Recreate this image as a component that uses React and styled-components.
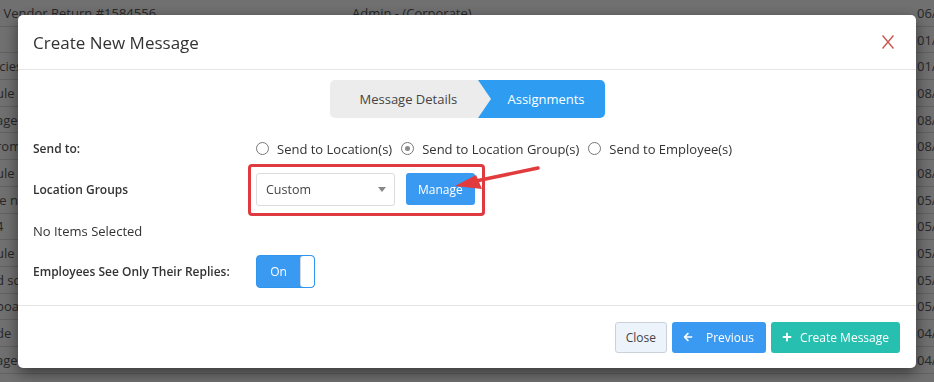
import React, {useState} from 'react'
import styled, {createGlobalStyle} from 'styled-components'
import {FaArrowLeft, FaPlus} from 'react-icons/fa'

const GlobalStyle = createGlobalStyle`
  html, body {
    margin: 0;
    padding: 0;
    background: #fff;
    font-family: "Open Sans", "Liberation Sans", Arial, sans-serif;
    overflow: hidden;
  }
`

// page behind the dialog
const Page = styled.div`
  width: 934px;
  height: 382px;
  overflow: hidden;
  background: #fff;
`
const TableRow = styled.div`
  display: grid;
  grid-template-columns: 356px 565px 120px;
  height: 26.7px;
  align-items: center;
  border-bottom: 1px solid #dcdcdc;
  box-sizing: border-box;
  font-size: 13px;
  color: #5a5a5a;
  margin-left: -4px;
  white-space: nowrap;
`
const Cell = styled.div`
  overflow: hidden;
`
const Backdrop = styled.div`
  position: fixed;
  inset: 0;
  background: rgba(0, 0, 0, 0.56);
`

// dialog
const Modal = styled.div`
  position: fixed;
  top: 15px;
  left: 18px;
  width: 898px;
  height: 353px;
  background: #fff;
  border-radius: 5px;
  box-shadow: 0 5px 15px rgba(0, 0, 0, 0.5);
  display: flex;
  flex-direction: column;
  color: #333;
`
const Header = styled.div`
  height: 54px;
  display: flex;
  align-items: center;
  justify-content: space-between;
  padding: 0 15px;
  border-bottom: 1px solid #e5e5e5;
`
const Title = styled.h4`
  margin: 0;
  font-size: 17px;
  font-weight: 400;
  color: #333;
`
const CloseX = styled.button`
  border: 0;
  background: none;
  padding: 0;
  margin-right: 7px;
  width: 12px;
  height: 14px;
  display: flex;
  cursor: pointer;
`
const Body = styled.div`
  flex: 1;
  padding: 10px 15px 0;
`
const Steps = styled.div`
  display: flex;
  width: max-content;
  margin: 0 auto 10px;
  border-radius: 5px;
  overflow: hidden;
  height: 38px;
`
const Step = styled.div`
  position: relative;
  display: flex;
  align-items: center;
  font-size: 13px;
  background: ${p => p.active ? '#2d9cf1' : '#ececec'};
  color: ${p => p.active ? '#fff' : '#444'};
  padding: 0 20px 0 30px;
  width: ${p => p.w}px;
  box-sizing: border-box;
  &::after {
    content: ${p => p.active ? 'none' : "''"};
    position: absolute;
    right: -13px;
    top: 0;
    border-left: 13px solid #ececec;
    border-top: 19px solid transparent;
    border-bottom: 19px solid transparent;
    z-index: 2;
  }
`
const FormRow = styled.div`
  display: flex;
  align-items: center;
  height: 41px;
`
const Label = styled.div`
  width: 223px;
  flex-shrink: 0;
  font-size: ${p => p.plain ? 13 : 12}px;
  font-weight: ${p => p.plain ? 400 : 600};
  color: #333;
`
const RadioGroup = styled.div`
  display: flex;
  align-items: center;
  gap: 9px;
`
const RadioItem = styled.label`
  display: flex;
  align-items: center;
  gap: 8px;
  font-size: 13px;
  color: #333;
  cursor: pointer;
`
const RadioDot = styled.span`
  width: 11px;
  height: 11px;
  border: 1px solid #777;
  border-radius: 50%;
  display: flex;
  align-items: center;
  justify-content: center;
  background: #fff;
  &::after {
    content: '';
    width: 5px;
    height: 5px;
    border-radius: 50%;
    background: ${p => p.checked ? '#8a8a8a' : 'transparent'};
  }
`
const Highlight = styled.div`
  position: relative;
  display: flex;
  align-items: center;
  gap: 11px;
  border: 3px solid #df3a3f;
  border-radius: 4px;
  padding: 6px 7px 7px 5px;
  margin: -10px 0 -10px -8px;
`
const Select = styled.div`
  width: 139px;
  height: 33px;
  box-sizing: border-box;
  border: 1px solid #dcdcdc;
  border-radius: 3px;
  display: flex;
  align-items: center;
  justify-content: space-between;
  padding: 0 8px 0 9px;
  font-size: 12.5px;
  color: #444;
  &::after {
    content: '';
    border-top: 5px solid #888;
    border-left: 4px solid transparent;
    border-right: 4px solid transparent;
  }
`
const Button = styled.button`
  height: ${p => p.h || 31}px;
  border-radius: 3px;
  font-family: inherit;
  font-size: 12px;
  padding: 0 ${p => p.pr || 11}px 0 ${p => p.pl || 11}px;
  display: flex;
  align-items: center;
  gap: ${p => p.gap || 0}px;
  cursor: pointer;
  border: 1px solid ${p => p.variant === 'light' ? '#c9d1db' : 'transparent'};
  color: ${p => p.variant === 'light' ? '#444' : '#fff'};
  background: ${p =>
    p.variant === 'teal' ? '#27c0b0' :
    p.variant === 'light' ? '#ecf3fb' : '#3a9af2'};
`
const Arrow = styled.svg`
  position: absolute;
  left: 0;
  top: 0;
  overflow: visible;
  pointer-events: none;
`
const Toggle = styled.div`
  width: 59px;
  height: 33px;
  box-sizing: border-box;
  border-radius: 4px;
  border: 1px solid #2f95ee;
  background: #3a9af2;
  display: flex;
  overflow: hidden;
`
const ToggleOn = styled.span`
  flex: 1;
  display: flex;
  align-items: center;
  justify-content: center;
  color: #fff;
  font-size: 12px;
`
const ToggleKnob = styled.span`
  width: 13px;
  background: #fff;
  border-radius: 3px;
  border-left: 1px solid #cfd6de;
`
const Footer = styled.div`
  height: 63px;
  border-top: 1px solid #e5e5e5;
  display: flex;
  align-items: center;
  justify-content: flex-end;
  gap: 5px;
  padding: 0 16px;
  box-sizing: border-box;
`

// only the edge of the list shows past the dialog
const rows = [
  ['- Vendor Return #1584556', 'Admin - (Corporate)', '06/12/2019'],
  ['', '', '01/20/2020'],
  ['icies', '', '01/17/2020'],
  ['ule', '', '08/30/2019'],
  ['age', '', '08/27/2019'],
  ['rom', '', '08/21/2019'],
  ['ule', '', '08/15/2019'],
  ['le n', '', '05/30/2019'],
  ['4', '', '05/28/2019'],
  ['ule', '', '05/22/2019'],
  ['d sc', '', '05/20/2019'],
  ['boat', '', '05/14/2019'],
  ['de', '', '04/30/2019'],
  ['age', '', '04/22/2019'],
]

const sendOptions = ['Send to Location(s)', 'Send to Location Group(s)', 'Send to Employee(s)']

export default function App() {
  const [sendTo, setSendTo] = useState(1)

  return (
    <Page>
      <GlobalStyle />
      {rows.map((r, i) => (
        <TableRow key={i}>
          <Cell>{r[0]}</Cell>
          <Cell>{r[1]}</Cell>
          <Cell>{r[2]}</Cell>
        </TableRow>
      ))}
      <Backdrop />
      <Modal>
        <Header>
          <Title>Create New Message</Title>
          <CloseX aria-label="Close">
            <svg width="12" height="14" viewBox="0 0 12 14">
              <path d="M0.5 0.5L11.5 13.5M11.5 0.5L0.5 13.5" stroke="#c9584f" strokeWidth="1.5" fill="none" />
            </svg>
          </CloseX>
        </Header>
        <Body>
          <Steps>
            <Step w={148}>Message Details</Step>
            <Step active w={127}>Assignments</Step>
          </Steps>
          <FormRow>
            <Label>Send to:</Label>
            <RadioGroup>
              {sendOptions.map((o, i) => (
                <RadioItem key={o} onClick={() => setSendTo(i)}>
                  <RadioDot checked={sendTo === i} />
                  {o}
                </RadioItem>
              ))}
            </RadioGroup>
          </FormRow>
          <FormRow>
            <Label>Location Groups</Label>
            <Highlight>
              <Select>Custom</Select>
              <Button h={32}>Manage</Button>
              <Arrow width="300" height="40">
                <line x1="287" y1="1" x2="220" y2="15" stroke="#e23b3e" strokeWidth="3.5" strokeLinecap="round" />
                <polygon points="204,19 225,8 231,22" fill="#e23b3e" />
              </Arrow>
            </Highlight>
          </FormRow>
          <FormRow>
            <Label plain>No Items Selected</Label>
          </FormRow>
          <FormRow>
            <Label>Employees See Only Their Replies:</Label>
            <Toggle>
              <ToggleOn>On</ToggleOn>
              <ToggleKnob />
            </Toggle>
          </FormRow>
        </Body>
        <Footer>
          <Button variant="light" pl={10} pr={10}>Close</Button>
          <Button pl={10} pr={11} gap={13}><FaArrowLeft size={10} />Previous</Button>
          <Button variant="teal" pl={10} pr={10} gap={8}><FaPlus size={10} />Create Message</Button>
        </Footer>
      </Modal>
    </Page>
  )
}
